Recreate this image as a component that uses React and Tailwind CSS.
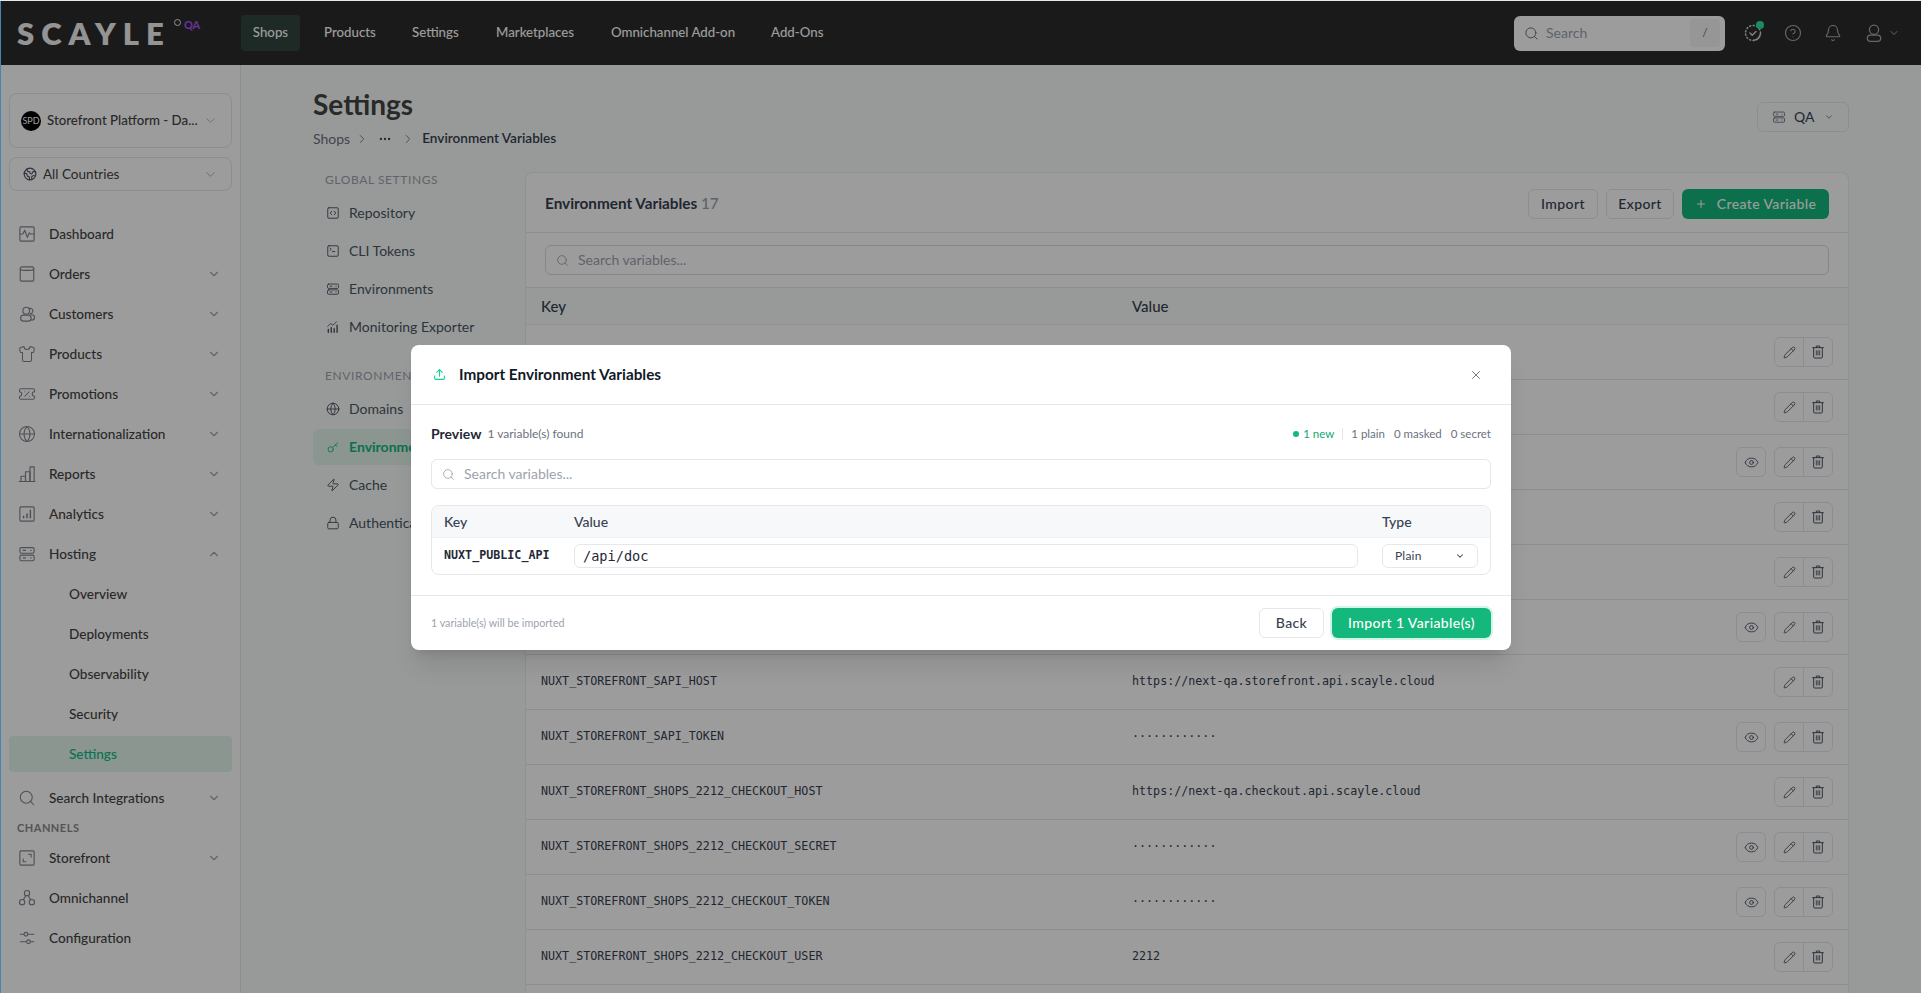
// Hosting settings page with the "Import Environment Variables" dialog open

import {
  ChevronDown, ChevronUp, ChevronRight, Search, CircleHelp, Bell, Shirt, TicketPercent, Globe, Earth,
  Plus, SquareCode, SquareTerminal, Zap, Lock, Eye, Pencil, Upload, X, Ellipsis,
} from 'lucide-react';

const MONO = "font-['DejaVu_Sans_Mono',monospace]";

// ── Icones dessinees ──────────────────────────

function Svg({ size = 18, children, className = '' }) {
  return (
    <svg width={size} height={size} viewBox="0 0 24 24" fill="none" stroke="currentColor" strokeWidth="1.5" strokeLinecap="round" strokeLinejoin="round" className={className}>
      {children}
    </svg>
  );
}

const IconDashboard = () => (
  <Svg><rect x="2.5" y="2.5" width="19" height="19" rx="1.5" /><path d="M2.5 12h4l2.5-5 3.5 9.5 2.5-6 1.5 1.5h5" /></Svg>
);
const IconOrders = () => (
  <Svg><path d="M5 2.5h14a2 2 0 0 1 2 2V20a1.5 1.5 0 0 1-1.5 1.5h-15A1.5 1.5 0 0 1 3 20V4.5a2 2 0 0 1 2-2z" /><path d="M3 6c3 1.6 15 1.6 18 0" /></Svg>
);
const IconCustomers = () => (
  <Svg>
    <circle cx="11" cy="7.5" r="4.5" />
    <path d="M14.5 5a3.5 3.5 0 1 1 2 6.5" />
    <rect x="3.5" y="13.5" width="14" height="8" rx="4" />
    <path d="M17 13h1.5a3.5 3.5 0 0 1 0 7H17" />
  </Svg>
);
const IconReports = () => (
  <Svg><path d="M1.5 22h21" /><path d="M4 22v-7h6v7" /><path d="M10 22V9h6v13" /><path d="M16 22V2.5h5.5V22" /></Svg>
);
const IconAnalytics = () => (
  <Svg>
    <rect x="2.5" y="2.5" width="19" height="19" rx="1.5" />
    <path d="M7.5 17v-2M12 17v-5M16.5 17V7" strokeWidth="2" />
  </Svg>
);
const IconServer = ({ size = 18 }) => (
  <Svg size={size}>
    <rect x="2.5" y="3.5" width="19" height="7.5" rx="2" />
    <rect x="2.5" y="13.5" width="19" height="7.5" rx="2" />
    <path d="M7 7.2h3M17 7.2h.5M7 17.2h3M17 17.2h.5" />
  </Svg>
);
const IconStorefront = () => (
  <Svg><rect x="2.5" y="2.5" width="19" height="19" rx="1.5" /><path d="M14 7h3.5v3.5M7 13.5V17h3.5" /></Svg>
);
const IconOmnichannel = () => (
  <Svg>
    <circle cx="12" cy="5.5" r="3.5" /><circle cx="5.5" cy="17.5" r="3.5" /><circle cx="18.5" cy="17.5" r="3.5" />
    <path d="M10.5 8.7 7.2 14.4M13.5 8.7l3.3 5.7" />
  </Svg>
);
const IconSliders = () => (
  <Svg>
    <circle cx="10.5" cy="7" r="2.5" /><circle cx="14" cy="17" r="2.5" />
    <path d="M3 7h5M13 7h8M3 17h8.5M16.5 17H21" />
  </Svg>
);
const IconMonitoring = () => (
  <Svg size={14}>
    <path d="M4 21v-5M9 21v-8M14 21v-6M19 21V9" strokeWidth="2.4" />
    <path d="M3 11l5-5 4 3 6-6" />
  </Svg>
);
const IconKey = () => (
  <Svg size={14}>
    <circle cx="8" cy="16" r="4.5" /><path d="M11.5 12.5 20 5M16 8.5l2.5 2.5" />
  </Svg>
);
const IconTrash = () => (
  <Svg size={16}>
    <path d="M4 5.5h16M9.5 5.5V3h5v2.5" />
    <path d="M5.5 5.5v14A1.5 1.5 0 0 0 7 21h10a1.5 1.5 0 0 0 1.5-1.5v-14" />
    <path d="M9.5 10v6.5M12 10v6.5M14.5 10v6.5" strokeWidth="1.3" />
  </Svg>
);
const IconStatus = () => (
  <span className="relative flex w-[18px] h-[18px] text-[#d0d0d0]">
    <svg width="18" height="18" viewBox="0 0 24 24" fill="none" stroke="currentColor" strokeWidth="2" strokeLinecap="round" strokeLinejoin="round">
      <circle cx="12" cy="12" r="10" strokeDasharray="1.5 3.2" />
      <path d="M13 21.6a10 10 0 0 0 8.8-8" />
      <path d="m8 12 3 3 5-5" />
    </svg>
    <span className="absolute -top-[3px] -right-[2px] w-2 h-2 rounded-full bg-[#28e89c]" />
  </span>
);
const IconUser = () => (
  <Svg size={20}>
    <circle cx="12" cy="8" r="5.5" />
    <rect x="4" y="14.5" width="16" height="7.5" rx="3.75" />
  </Svg>
);

// ── Barre du haut ─────────────────────────────

const TOP_LINKS = [
  { label: 'Products', width: 'w-[88px]' },
  { label: 'Settings', width: 'w-[84px]' },
  { label: 'Marketplaces', width: 'w-[115px]' },
  { label: 'Omnichannel Add-on', width: 'w-[160px]' },
  { label: 'Add-Ons', width: 'w-[80px]' },
];

function TopBar() {
  return (
    <header className="h-[64px] shrink-0 bg-[#2b2b2b] flex items-center text-white">
      <div className="w-[240px] shrink-0 pl-[16px] flex items-start">
        <span className="text-[31px] leading-none font-extrabold tracking-[7px] text-[#f2f2f2]">SCAYLE</span>
        <span className="w-[7px] h-[7px] mt-[1px] ml-[3px] rounded-full border-[1.5px] border-[#f2f2f2]" />
        <span className="ml-[3px] mt-[1px] text-[11px] leading-[12px] font-bold text-[#a855f7]">QA</span>
      </div>
      <span className="h-[36px] w-[59px] flex items-center justify-center rounded bg-[#32463f] text-[13.25px] font-medium">Shops</span>
      <nav className="flex items-center pl-[24px]">
        {TOP_LINKS.map((l) => (
          <span key={l.label} className={`${l.width} text-[13.25px] font-medium whitespace-nowrap`}>{l.label}</span>
        ))}
      </nav>
      <div className="ml-auto flex items-center">
        <div className="w-[211px] h-[35px] rounded-md bg-white flex items-center pl-[10px] pr-[5px] text-[#6b7280]">
          <Search size={15} strokeWidth={1.6} />
          <span className="ml-[7px] text-sm text-[#9ca3af]">Search</span>
          <span className="ml-auto w-[30px] h-[28px] rounded bg-[#f5f5f5] flex items-center justify-center text-xs text-[#6b7280]">/</span>
        </div>
        <div className="flex items-center gap-[22px] ml-[19px] mr-[21px] text-[#aaaaaa]">
          <IconStatus />
          <CircleHelp size={18} strokeWidth={1.5} />
          <Bell size={18} strokeWidth={1.5} />
          <div className="flex items-center gap-[4px]">
            <IconUser />
            <ChevronDown size={12} />
          </div>
        </div>
      </div>
    </header>
  );
}

// ── Barre laterale ────────────────────────────

const NAV_MAIN = [
  { label: 'Dashboard', Icon: IconDashboard },
  { label: 'Orders', Icon: IconOrders, chevron: 'down' },
  { label: 'Customers', Icon: IconCustomers, chevron: 'down' },
  { label: 'Products', Icon: () => <Shirt size={18} strokeWidth={1.4} />, chevron: 'down' },
  { label: 'Promotions', Icon: () => <TicketPercent size={18} strokeWidth={1.4} />, chevron: 'down' },
  { label: 'Internationalization', Icon: () => <Globe size={18} strokeWidth={1.4} />, chevron: 'down' },
  { label: 'Reports', Icon: IconReports, chevron: 'down' },
  { label: 'Analytics', Icon: IconAnalytics, chevron: 'down' },
  { label: 'Hosting', Icon: IconServer, chevron: 'up' },
];
const NAV_HOSTING = ['Overview', 'Deployments', 'Observability', 'Security', 'Settings'];
const NAV_CHANNELS = [
  { label: 'Storefront', Icon: IconStorefront, chevron: 'down' },
  { label: 'Omnichannel', Icon: IconOmnichannel },
  { label: 'Configuration', Icon: IconSliders },
];

function NavRow({ label, Icon, chevron }) {
  return (
    <div className="h-10 flex items-center pl-[9px] pr-[11px] text-[13.6px] font-medium text-[#444444]">
      <span className="w-[18px] flex justify-center text-[#7f848c] mr-[13px]"><Icon /></span>
      {label}
      {chevron === 'down' && <ChevronDown size={14} className="ml-auto text-[#9ca3af]" />}
      {chevron === 'up' && <ChevronUp size={14} className="ml-auto text-[#9ca3af]" />}
    </div>
  );
}

function Sidebar() {
  return (
    <aside className="w-[240px] shrink-0 border-r border-[#e5e7eb] bg-white pt-[28px] px-[8px]">
      <div className="h-[55px] rounded-lg border border-[#e5e7eb] flex items-center pl-[11px] pr-[13px]">
        <span className="w-5 h-5 rounded-full bg-black text-white text-[9px] flex items-center justify-center shrink-0">SPD</span>
        <span className="ml-[6px] text-[13.25px] font-medium text-[#444444] whitespace-nowrap">Storefront Platform - Da...</span>
        <ChevronDown size={15} strokeWidth={1.5} className="ml-auto text-[#b0b4ba]" />
      </div>
      <div className="h-[34px] mt-[9px] rounded-lg border border-[#e5e7eb] flex items-center pl-[13px] pr-[13px]">
        <Earth size={14} className="text-[#4b5563]" />
        <span className="ml-[6px] text-[13.5px] text-[#444444]">All Countries</span>
        <ChevronDown size={15} strokeWidth={1.5} className="ml-auto text-[#b0b4ba]" />
      </div>

      <nav className="mt-[23px]">
        {NAV_MAIN.map((n) => <NavRow key={n.label} {...n} />)}
        {NAV_HOSTING.map((s) => (
          <div key={s} className="h-10 flex items-center">
            <span className={`w-full h-9 flex items-center rounded pl-[60px] text-[13.6px] font-medium ${s === 'Settings' ? 'bg-[#e3f5ee] text-[#10b981]' : 'text-[#444444]'}`}>{s}</span>
          </div>
        ))}
        <div className="mt-[4px]">
          <NavRow label="Search Integrations" Icon={() => <Search size={18} strokeWidth={1.4} />} chevron="down" />
        </div>
        <div className="h-5 flex items-center pl-[8px] text-[11px] font-bold tracking-[0.5px] text-[#8a8a8a]">CHANNELS</div>
        {NAV_CHANNELS.map((n) => <NavRow key={n.label} {...n} />)}
      </nav>
    </aside>
  );
}

// ── Page reglages ─────────────────────────────

const SETTINGS_GLOBAL = [
  { label: 'Repository', Icon: () => <SquareCode size={14} strokeWidth={1.6} /> },
  { label: 'CLI Tokens', Icon: () => <SquareTerminal size={14} strokeWidth={1.6} /> },
  { label: 'Environments', Icon: () => <IconServer size={14} /> },
  { label: 'Monitoring Exporter', Icon: IconMonitoring },
];
const SETTINGS_ENV = [
  { label: 'Domains', Icon: () => <Globe size={14} strokeWidth={1.6} /> },
  { label: 'Environment Variables', Icon: IconKey, active: true },
  { label: 'Cache', Icon: () => <Zap size={14} strokeWidth={1.6} /> },
  { label: 'Authentication', Icon: () => <Lock size={14} strokeWidth={1.6} /> },
];

function SettingsItem({ label, Icon, active }) {
  return (
    <div className="h-[38px] flex items-center">
      <div className={`w-full h-9 flex items-center rounded-md pl-[13px] text-sm whitespace-nowrap ${active ? 'bg-[#e3f5ee] text-[#10b981] font-bold' : 'text-[#4b5563]'}`}>
        <span className="w-[14px] mr-[9px] flex justify-center"><Icon /></span>
        {label}
      </div>
    </div>
  );
}

function SettingsNav() {
  return (
    <div className="w-[212px] shrink-0 pr-[12px]">
      <p className="h-4 pl-[12px] text-xs leading-4 tracking-[0.6px] text-[#9ca3af]">GLOBAL SETTINGS</p>
      <div className="mt-[6px]">{SETTINGS_GLOBAL.map((i) => <SettingsItem key={i.label} {...i} />)}</div>
      <p className="h-4 mt-[22px] pl-[12px] text-xs leading-4 tracking-[0.6px] text-[#9ca3af]">ENVIRONMENT SETTINGS</p>
      <div className="mt-[6px]">{SETTINGS_ENV.map((i) => <SettingsItem key={i.label} {...i} />)}</div>
    </div>
  );
}

// Les lignes 1 a 6 sont cachees par la modale
const MASK = '············';
const ROWS = [
  { eye: false }, { eye: false }, { eye: true }, { eye: false }, { eye: false }, { eye: true },
  { k: 'NUXT_STOREFRONT_SAPI_HOST', v: 'https://next-qa.storefront.api.scayle.cloud' },
  { k: 'NUXT_STOREFRONT_SAPI_TOKEN', v: MASK, eye: true },
  { k: 'NUXT_STOREFRONT_SHOPS_2212_CHECKOUT_HOST', v: 'https://next-qa.checkout.api.scayle.cloud' },
  { k: 'NUXT_STOREFRONT_SHOPS_2212_CHECKOUT_SECRET', v: MASK, eye: true },
  { k: 'NUXT_STOREFRONT_SHOPS_2212_CHECKOUT_TOKEN', v: MASK, eye: true },
  { k: 'NUXT_STOREFRONT_SHOPS_2212_CHECKOUT_USER', v: '2212' },
];

function VariableRow({ k, v, eye }) {
  return (
    <div className="h-[55px] shrink-0 border-b border-[#e5e7eb] flex items-center pl-[15px] pr-[15px]">
      <span className={`w-[591px] shrink-0 ${MONO} text-[11.7px] text-[#374151]`}>{k}</span>
      <span className={`${MONO} text-[11.7px] text-[#374151]`}>{v}</span>
      <div className="ml-auto flex items-center text-[#4b5563]">
        {eye && (
          <span className="w-[30px] h-[30px] mr-[8px] rounded-md border border-[#e5e7eb] flex items-center justify-center">
            <Eye size={15} strokeWidth={1.5} />
          </span>
        )}
        <div className="h-[30px] flex rounded-md border border-[#e5e7eb] divide-x divide-[#e5e7eb]">
          <span className="w-[29px] flex items-center justify-center"><Pencil size={13} strokeWidth={1.6} /></span>
          <span className="w-[28px] flex items-center justify-center"><IconTrash /></span>
        </div>
      </div>
    </div>
  );
}

function VariablesCard() {
  return (
    <section className="flex-1 min-w-0 rounded-t-lg border border-b-0 border-[#eceeed] bg-white flex flex-col">
      <div className="h-[60px] shrink-0 border-b border-[#e5e7eb] flex items-center px-[19px] pt-[2px]">
        <h2 className="text-[15.3px] font-bold text-[#374151]">
          Environment Variables <span className="font-medium text-[#9ca3af]">17</span>
        </h2>
        <div className="ml-auto flex gap-2 text-sm font-medium tracking-[0.4px]">
          <span className="w-[70px] h-[30px] rounded-md border border-[#e5e7eb] flex items-center justify-center text-[#374151]">Import</span>
          <span className="w-[68px] h-[30px] rounded-md border border-[#e5e7eb] flex items-center justify-center text-[#374151]">Export</span>
          <span className="w-[147px] h-[30px] rounded-md bg-[#14b87c] flex items-center justify-center gap-[10px] text-white">
            <Plus size={12} />
            Create Variable
          </span>
        </div>
      </div>
      <div className="h-[55px] shrink-0 border-b border-[#e5e7eb] flex items-center px-[19px]">
        <div className="w-full h-[30px] rounded-md border border-[#d9dcdf] flex items-center pl-[10px] text-[#9ca3af]">
          <Search size={13} strokeWidth={1.6} />
          <span className="ml-[9px] text-sm">Search variables...</span>
        </div>
      </div>
      <div className="h-[37px] shrink-0 bg-[#f8fcfa] border-b border-[#eceeed] flex items-center pl-[15px] text-[15px] font-medium text-[#374151]">
        <span className="w-[591px]">Key</span>
        <span>Value</span>
      </div>
      {ROWS.map((r, i) => <VariableRow key={i} {...r} />)}
    </section>
  );
}

function MainContent() {
  return (
    <main className="flex-1 min-w-0 bg-[#f8fcfa] pl-[72px] pr-[72px] pt-[21px] overflow-hidden flex flex-col">
      <div className="flex items-start justify-between">
        <div>
          <h1 className="h-9 text-[28px] leading-9 font-bold text-[#444444]">Settings</h1>
          <div className="h-5 mt-[7px] flex items-center text-sm text-[#6b7280]">
            <span>Shops</span>
            <ChevronRight size={14} strokeWidth={1.5} className="mx-[5px]" />
            <Ellipsis size={14} className="mx-[4px] text-[#374151]" />
            <ChevronRight size={14} strokeWidth={1.5} className="mx-[5px]" />
            <span className="text-[13.6px] font-semibold text-[#374151] ml-[2px]">Environment Variables</span>
          </div>
        </div>
        <div className="w-[92px] h-[30px] mt-[16px] rounded-md border border-[#e5e7eb] flex items-center pl-[14px] text-sm text-[#374151]">
          <span className="text-[#6b7280]"><IconServer size={14} /></span>
          <span className="ml-[8px]">QA</span>
          <ChevronDown size={10} className="ml-[10px] text-[#6b7280]" />
        </div>
      </div>
      <div className="flex flex-1 mt-[23px] min-h-0">
        <SettingsNav />
        <VariablesCard />
      </div>
    </main>
  );
}

// ── Modale d'import ───────────────────────────

function ImportModal() {
  return (
    <div className="absolute inset-0 z-50 bg-black/[0.39] flex items-center justify-center">
      <div className="w-[1100px] h-[305px] mt-[1px] bg-white rounded-lg shadow-xl flex flex-col">
        <div className="h-[60px] shrink-0 border-b border-[#e5e7eb] flex items-center pl-[22px] pr-[28px]">
          <Upload size={13} strokeWidth={2} className="text-[#14d08f]" />
          <h3 className="ml-[13px] text-[15.3px] font-bold text-[#111827]">Import Environment Variables</h3>
          <X size={14} strokeWidth={1.6} className="ml-auto text-[#6b7280]" />
        </div>

        <div className="flex-1 px-5 pt-[19px] border-b border-[#e5e7eb]">
          <div className="h-5 flex items-center">
            <span className="text-sm font-bold text-[#1f2937]">Preview</span>
            <span className="ml-[6px] text-xs text-[#6b7280]">1 variable(s) found</span>
            <div className="ml-auto flex items-center text-[11.5px] text-[#6b7280]">
              <span className="w-[6px] h-[6px] rounded-full bg-[#10b981] mr-[4px]" />
              <span className="text-[#10a872]">1 new</span>
              <span className="w-px h-3 bg-[#e5e7eb] mx-[8px]" />
              <span>1 plain</span>
              <span className="ml-[9px]">0 masked</span>
              <span className="ml-[9px]">0 secret</span>
            </div>
          </div>
          <div className="h-[30px] mt-[15px] rounded-md border border-[#e5e7eb] flex items-center pl-[10px] text-[#9ca3af]">
            <Search size={13} strokeWidth={1.6} />
            <span className="ml-[9px] text-sm">Search variables...</span>
          </div>
          <div className="h-[70px] mt-[16px] rounded-lg border border-[#e5e7eb] overflow-hidden">
            <div className="h-[32px] bg-[#f7f8fa] border-b border-[#f0f1f3] flex items-center pl-[12px] text-sm font-medium text-[#374151]">
              <span className="w-[130px]">Key</span>
              <span className="w-[808px]">Value</span>
              <span>Type</span>
            </div>
            <div className="h-[36px] flex items-center pl-[12px]">
              <span className={`w-[130px] shrink-0 ${MONO} text-[11.7px] font-bold text-[#1f2937]`}>NUXT_PUBLIC_API</span>
              <span className={`w-[784px] shrink-0 h-6 rounded-md border border-[#e5e7eb] flex items-center pl-[8px] ${MONO} text-[13.6px] text-[#1f2937]`}>/api/doc</span>
              <span className="w-[96px] shrink-0 ml-[24px] h-6 rounded-md border border-[#e5e7eb] flex items-center pl-[12px] pr-[12px] text-xs tracking-[0.2px] text-[#374151]">
                Plain
                <ChevronDown size={10} strokeWidth={2.5} className="ml-auto" />
              </span>
            </div>
          </div>
        </div>

        <div className="h-[54px] shrink-0 flex items-center px-5">
          <span className="text-[10.7px] text-[#9ca3af]">1 variable(s) will be imported</span>
          <div className="ml-auto flex items-center gap-2 text-sm font-medium tracking-[0.4px]">
            <span className="w-[65px] h-[30px] rounded-md border border-[#e5e7eb] flex items-center justify-center text-[#374151]">Back</span>
            <span className="w-[159px] h-[30px] rounded-md bg-[#14b87c] ring-2 ring-[#d1f5e6] flex items-center justify-center text-white">Import 1 Variable(s)</span>
          </div>
        </div>
      </div>
    </div>
  );
}

// ── Composant principal ───────────────────────

export default function App() {
  return (
    <div className="h-screen flex flex-col overflow-hidden font-['Lato',sans-serif] bg-white">
      <div className="h-px shrink-0 bg-[#e6e8ea]" />
      <div className="flex flex-1 min-h-0">
        <div className="w-px shrink-0 bg-[#3f86bd]" />
        <div className="relative flex-1 min-w-0 flex flex-col">
          <TopBar />
          <div className="flex flex-1 min-h-0">
            <Sidebar />
            <MainContent />
          </div>
          <ImportModal />
        </div>
      </div>
    </div>
  );
}
